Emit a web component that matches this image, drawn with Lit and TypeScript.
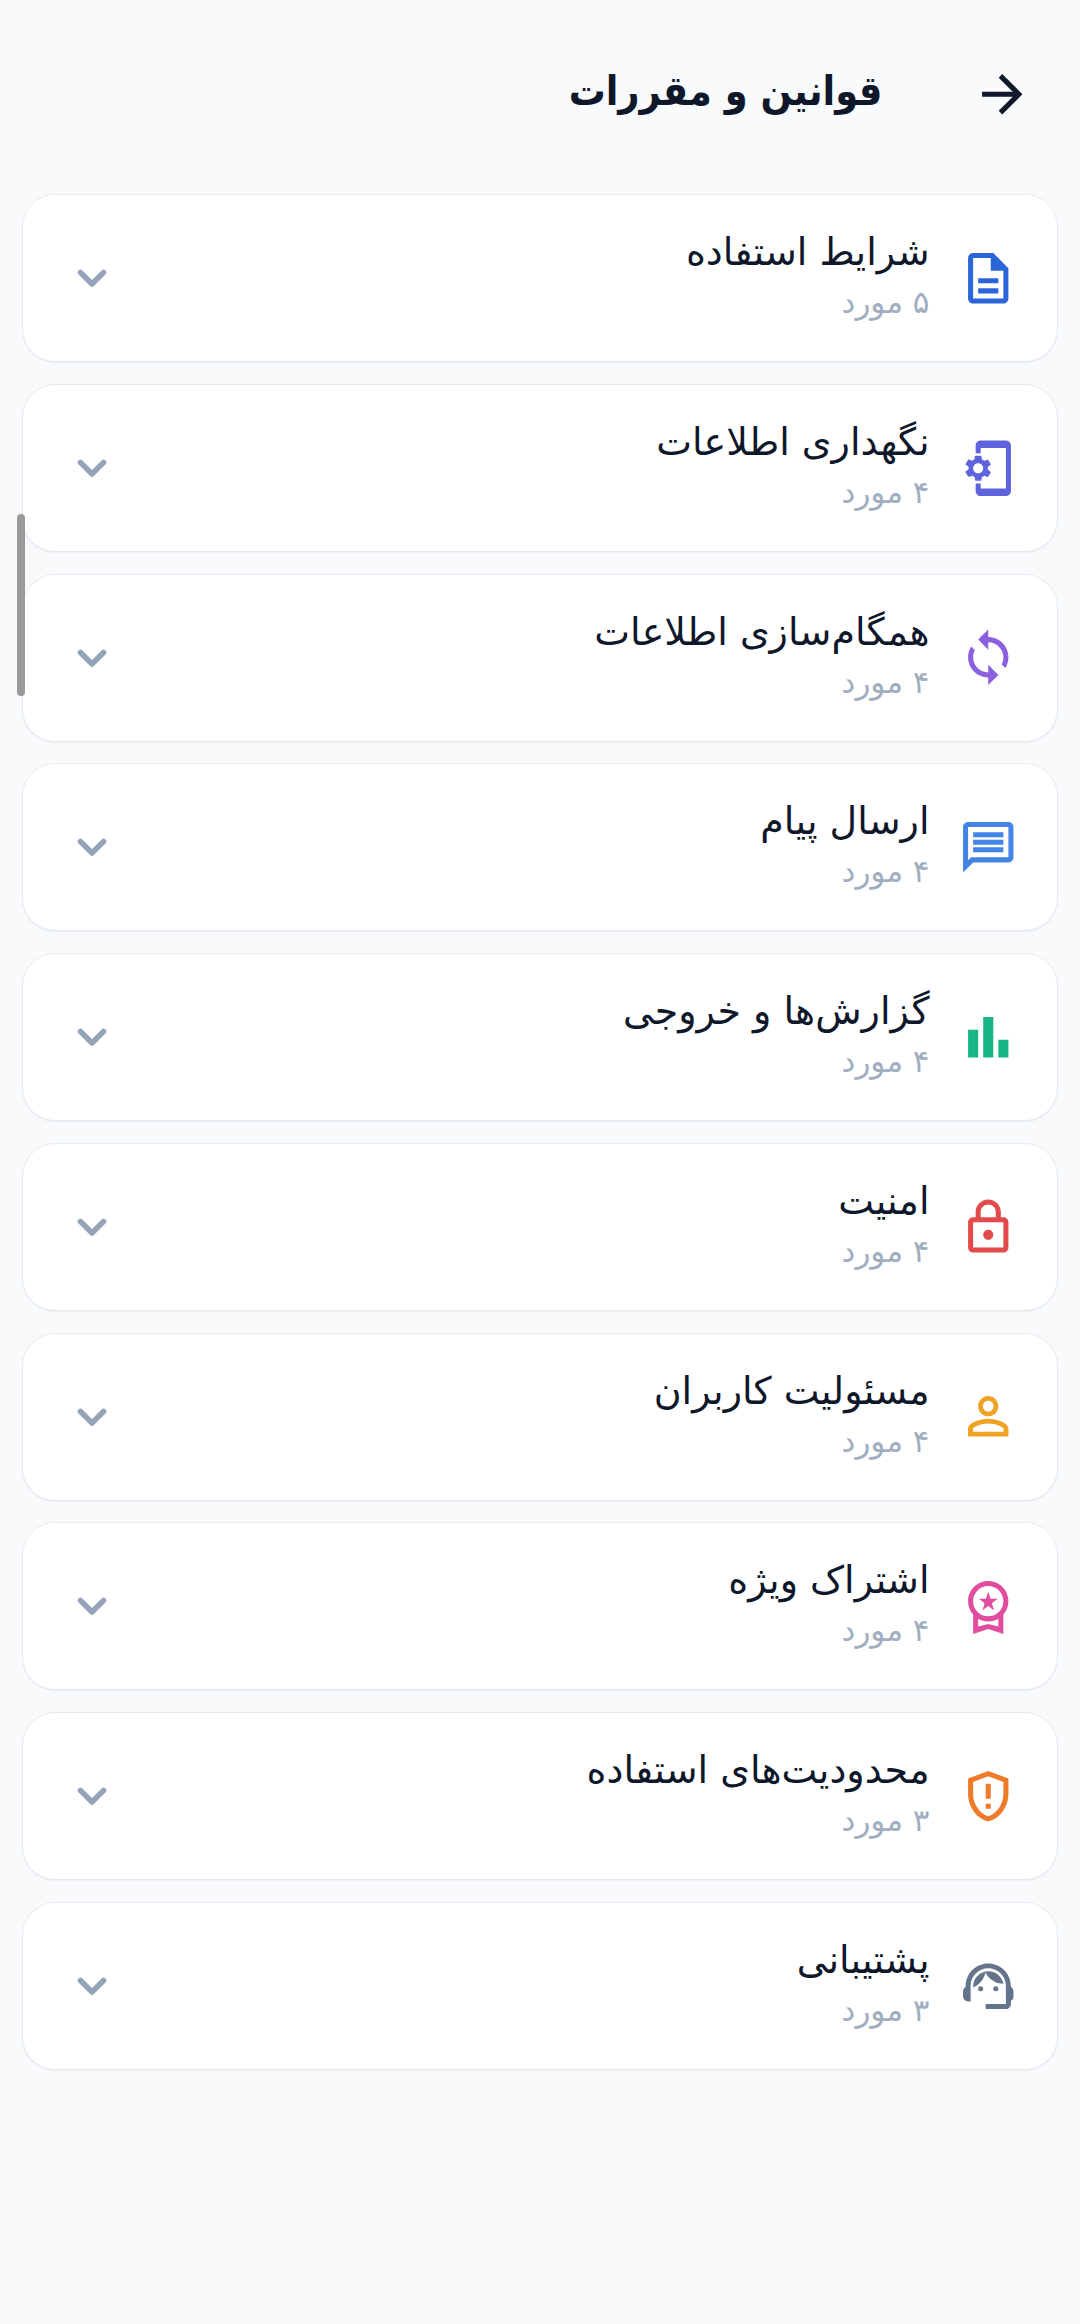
import { LitElement, html, css, svg } from 'lit';
import { customElement } from 'lit/decorators.js';

// Material icon paths, 24 unit viewBox
const ICONS: Record<string, unknown> = {
  doc: svg`<path d="M8 16h8v2H8zm0-4h8v2H8zm6-10H6c-1.1 0-2 .9-2 2v16c0 1.1.89 2 1.99 2H18c1.1 0 2-.9 2-2V8l-6-6zm4 18H6V4h7v5h5v11z"/>`,
  phone: svg`<path d="M11.8 12.5v-1l1.1-.8c.1-.1.1-.2.1-.3l-1-1.7c-.1-.1-.2-.2-.3-.1l-1.3.4c-.3-.2-.6-.4-.9-.5l-.2-1.3c0-.1-.1-.2-.3-.2H7c-.1 0-.2.1-.3.2l-.2 1.3c-.3.1-.6.3-.9.5l-1.3-.5c-.1 0-.2 0-.3.1l-1 1.7c-.1.1 0 .2.1.3l1.1.8v1l-1.1.8c-.1.2-.1.3-.1.4l1 1.7c.1.1.2.2.3.1l1.4-.4c.3.2.6.4.9.5l.2 1.3c-.1.1.1.2.2.2h2c.1 0 .2-.1.3-.2l.2-1.3c.3-.1.6-.3.9-.5l1.3.5c.1 0 .2 0 .3-.1l1-1.7c.1-.1 0-.2-.1-.3l-1.1-.9zM8 14c-1.1 0-2-.9-2-2s.9-2 2-2 2 .9 2 2-.9 2-2 2zM19 1H9c-1.1 0-2 .9-2 2v3h2V4h10v16H9v-2H7v3c0 1.1.9 2 2 2h10c1.1 0 2-.9 2-2V3c0-1.1-.9-2-2-2z"/>`,
  sync: svg`<path d="M12 4V1L8 5l4 4V6c3.31 0 6 2.69 6 6 0 1.01-.25 1.97-.7 2.8l1.46 1.46C19.54 15.03 20 13.57 20 12c0-4.42-3.58-8-8-8zm0 14c-3.31 0-6-2.69-6-6 0-1.01.25-1.97.7-2.8L5.24 7.74C4.46 8.97 4 10.43 4 12c0 4.42 3.58 8 8 8v3l4-4-4-4v3z"/>`,
  chat: svg`<path d="M4 4h16v12H5.17L4 17.17V4m0-2c-1.1 0-1.99.9-1.99 2L2 22l4-4h14c1.1 0 2-.9 2-2V4c0-1.1-.9-2-2-2H4zm2 10h12v2H6v-2zm0-3h12v2H6V9zm0-3h12v2H6V6z"/>`,
  bars: svg`<path d="M4 9h4v11H4zM10 4h4v16h-4zM16 13h4v7h-4z"/>`,
  lock: svg`<path d="M18 8h-1V6c0-2.76-2.24-5-5-5S7 3.24 7 6v2H6c-1.1 0-2 .9-2 2v10c0 1.1.9 2 2 2h12c1.1 0 2-.9 2-2V10c0-1.1-.9-2-2-2zM9 6c0-1.66 1.34-3 3-3s3 1.34 3 3v2H9V6zm9 14H6V10h12v10zm-6-3c1.1 0 2-.9 2-2s-.9-2-2-2-2 .9-2 2 .9 2 2 2z"/>`,
  person: svg`<path d="M12 5.9c1.16 0 2.1.94 2.1 2.1s-.94 2.1-2.1 2.1S9.9 9.16 9.9 8s.94-2.1 2.1-2.1m0 9c2.97 0 6.1 1.46 6.1 2.1v1.1H5.9V17c0-.64 3.13-2.1 6.1-2.1M12 4C9.79 4 8 5.79 8 8s1.79 4 4 4 4-1.79 4-4-1.79-4-4-4zm0 9c-2.67 0-8 1.34-8 4v3h16v-3c0-2.66-5.33-4-8-4z"/>`,
  badge: svg`<path d="M9.68 13.69 12 11.93l2.31 1.76-.88-2.85L15.75 9h-2.84L12 6.19 11.09 9H8.25l2.31 1.84-.88 2.85zM20 10c0-4.42-3.58-8-8-8s-8 3.58-8 8c0 2.03.76 3.87 2 5.28V23l6-2 6 2v-7.72c1.24-1.41 2-3.25 2-5.28zm-8-6c3.31 0 6 2.69 6 6s-2.69 6-6 6-6-2.69-6-6 2.69-6 6-6zm0 15-4 1.02v-3.1c1.18.68 2.54 1.08 4 1.08s2.82-.4 4-1.08v3.1L12 19z"/>`,
  shield: svg`<path d="M12 2 4 5v6.09c0 5.05 3.41 9.76 8 10.91 4.59-1.15 8-5.86 8-10.91V5l-8-3zm6 9.09c0 4-2.55 7.7-6 8.83-3.45-1.13-6-4.82-6-8.83V6.31l6-2.25 6 2.25v4.78zM11 15h2v2h-2zm0-8h2v6h-2z"/>`,
  agent: svg`<path d="M21 12.22C21 6.73 16.74 3 12 3c-4.69 0-9 3.65-9 9.28-.6.34-1 .98-1 1.72v2c0 1.1.9 2 2 2h1v-6.1c0-3.87 3.13-7 7-7s7 3.13 7 7V19h-8v2h8c1.1 0 2-.9 2-2v-1.22c.59-.31 1-.92 1-1.54v-2.3c0-.62-.41-1.23-1-1.72z"/><circle cx="9" cy="13" r="1"/><circle cx="15" cy="13" r="1"/><path d="M18 11.03C17.52 8.18 15.04 6 12.05 6c-3.03 0-6.29 2.51-6.03 6.45 2.47-1.01 4.33-3.21 4.86-5.89 1.31 2.63 4 4.44 7.12 4.47z"/>`,
};

const SECTIONS = [
  { title: 'شرایط استفاده', count: '۵ مورد', icon: 'doc', color: '#2b65d9' },
  { title: 'نگهداری اطلاعات', count: '۴ مورد', icon: 'phone', color: '#5f64dc' },
  { title: 'همگام‌سازی اطلاعات', count: '۴ مورد', icon: 'sync', color: '#8a5fe0' },
  { title: 'ارسال پیام', count: '۴ مورد', icon: 'chat', color: '#4484e4' },
  { title: 'گزارش‌ها و خروجی', count: '۴ مورد', icon: 'bars', color: '#18b584' },
  { title: 'امنیت', count: '۴ مورد', icon: 'lock', color: '#e34b4b' },
  { title: 'مسئولیت کاربران', count: '۴ مورد', icon: 'person', color: '#f0a224' },
  { title: 'اشتراک ویژه', count: '۴ مورد', icon: 'badge', color: '#e04d9e' },
  { title: 'محدودیت‌های استفاده', count: '۳ مورد', icon: 'shield', color: '#ee7b2a' },
  { title: 'پشتیبانی', count: '۳ مورد', icon: 'agent', color: '#64748b' },
];

@customElement('app-root')
export class AppRoot extends LitElement {
  static styles = css`
    :host {
      display: block;
      position: relative;
      height: 2324px;
      background: #f8fafc;
      font-family: 'DejaVu Sans', sans-serif;
      overflow: hidden;
    }

    .header {
      display: flex;
      align-items: center;
      height: 66px;
      padding: 61px 0 67px 22px;
      margin-right: 27px;
      gap: 89px;
    }

    .back {
      width: 60.5px;
      height: 60.5px;
      fill: #0f172a;
      flex: none;
      margin-right: 21px;
    }

    .header h1 {
      margin: 0;
      padding-bottom: 6px;
      font-size: 41px;
      font-weight: 700;
      font-stretch: condensed;
      color: #0f172a;
    }

    .list {
      display: flex;
      flex-direction: column;
      gap: 21.75px;
      padding: 0 22px;
    }

    .card {
      display: flex;
      align-items: center;
      box-sizing: border-box;
      height: 168px;
      padding: 0 39px 0 0;
      background: #fff;
      border: 1.5px solid #e6ebf1;
      border-radius: 33px;
      box-shadow: 0 1px 1px rgba(226, 232, 240, 0.7);
    }

    .icon {
      width: 60.5px;
      height: 60.5px;
      flex: none;
    }

    .text {
      flex: 1;
      margin-right: 28px;
      padding-bottom: 8px;
      display: flex;
      flex-direction: column;
      gap: 4px;
    }

    .title {
      font-size: 38px;
      line-height: 52px;
      color: #0f172a;
    }

    .count {
      font-size: 31px;
      line-height: 40px;
      color: #a0aec0;
    }

    .chevron {
      width: 66px;
      height: 66px;
      flex: none;
      margin-left: 36px;
      fill: none;
      stroke: #94a3b8;
      stroke-width: 2;
      stroke-linecap: round;
      stroke-linejoin: round;
    }

    .scrollbar {
      position: absolute;
      left: 17px;
      top: 514px;
      width: 8px;
      height: 182px;
      border-radius: 4px;
      background: #999;
    }
  `;

  render() {
    return html`
      <div dir="rtl">
        <header class="header">
          <svg class="back" viewBox="0 0 24 24"><path d="M12 4l-1.41 1.41L16.17 11H4v2h12.17l-5.58 5.59L12 20l8-8z"/></svg>
          <h1>قوانین و مقررات</h1>
        </header>
        <div class="list">
          ${SECTIONS.map(s => html`
            <div class="card">
              <svg class="icon" viewBox="0 0 24 24" style="fill:${s.color}">${ICONS[s.icon]}</svg>
              <div class="text">
                <div class="title">${s.title}</div>
                <div class="count">${s.count}</div>
              </div>
              <svg class="chevron" viewBox="0 0 24 24"><path d="M7.8 10l4.2 4.2 4.2-4.2"/></svg>
            </div>
          `)}
        </div>
      </div>
      <div class="scrollbar"></div>
    `;
  }
}
